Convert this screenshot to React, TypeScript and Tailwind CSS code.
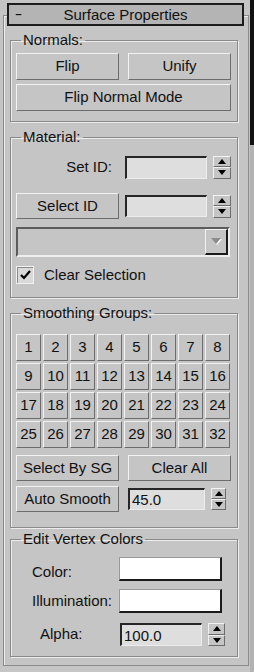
import React from "react";

const raised =
  "bg-[#c5c5c5] border border-t-[#f2f2f2] border-l-[#f2f2f2] border-b-[#6c6c6c] border-r-[#6c6c6c]";
const sunken =
  "bg-[#dedede] border-t-2 border-l-2 border-b border-r border-t-[#262626] border-l-[#262626] border-b-[#ececec] border-r-[#ececec]";

const Btn: React.FC<{ children: React.ReactNode; className?: string }> = ({ children, className }) => (
  <div className={`flex items-center justify-center ${raised} ${className ?? ""}`}>{children}</div>
);

const Spinner: React.FC<{ className?: string }> = ({ className }) => (
  <div className={`flex flex-col ${className ?? ""}`}>
    <div className={`flex-1 flex items-center justify-center ${raised}`}>
      <svg width="8" height="5" viewBox="0 0 8 5">
        <path d="M4 0 L8 5 H0 Z" fill="#000" />
      </svg>
    </div>
    <div className={`flex-1 flex items-center justify-center ${raised}`}>
      <svg width="8" height="5" viewBox="0 0 8 5">
        <path d="M0 0 H8 L4 5 Z" fill="#000" />
      </svg>
    </div>
  </div>
);

const Group: React.FC<{ title: string; className?: string; children: React.ReactNode }> = ({
  title,
  className,
  children,
}) => (
  <fieldset
    className={`ml-[6px] w-[228px] min-w-0 border border-[#8a8a8a] shadow-[inset_1px_1px_0_#ececec,1px_1px_0_#ececec] pl-[5px] pr-[6px] ${className ?? ""}`}
  >
    <legend className="ml-[5px] px-[2px] leading-[16px]">{title}</legend>
    {children}
  </fieldset>
);

export default function App() {
  return (
    <div className="w-[254px] h-[672px] bg-[#c5c5c5] flex font-['Liberation_Sans',Arial,sans-serif] text-[15px] text-[#111]">
      <div className="w-[250px] pt-[15px]">
        <div className="ml-[3px] w-[246px] h-[651px] border border-[#8a8a8a] shadow-[inset_1px_1px_0_#ececec]">
          {/* rollout header */}
          <div className="-mt-[13px] ml-[3px] w-[237px] h-[23px] border-2 border-[#1c1c1c] bg-[#b4b4b4] relative flex items-center justify-center leading-none">
            <span className="absolute left-[7px] top-[1px] scale-x-150">-</span>
            <span>Surface Properties</span>
          </div>

          <Group title="Normals:" className="mt-[6px] pt-[5px] pb-[10px]">
            <div className="flex gap-[9px]">
              <Btn className="w-[103px] h-[27px]">Flip</Btn>
              <Btn className="w-[103px] h-[27px]">Unify</Btn>
            </div>
            <Btn className="mt-[4px] w-[215px] h-[27px]">Flip Normal Mode</Btn>
          </Group>

          <Group title="Material:" className="mt-[7px] pt-[9px] pb-[12px]">
            <div className="flex items-center h-[26px]">
              <div className="w-[103px] text-right pr-[7px]">Set ID:</div>
              <div className={`ml-[6px] w-[82px] h-[23px] ${sunken}`} />
              <Spinner className="ml-[6px] w-[18px] h-[23px]" />
            </div>
            <div className="mt-[13px] flex items-center h-[26px]">
              <Btn className="w-[103px] h-[26px]">Select ID</Btn>
              <div className={`ml-[6px] w-[82px] h-[22px] ${sunken}`} />
              <Spinner className="ml-[6px] w-[18px] h-[23px]" />
            </div>
            <div className="mt-[8px] flex">
              <div className="flex w-fit border-2 border-t-[#5c5c5c] border-l-[#5c5c5c] border-b-[#eeeeee] border-r-[#eeeeee]">
                <div className="w-[187px] h-[26px]" />
                <div className="w-[23px] h-[26px] flex items-center justify-center bg-[#c5c5c5] border border-t-[#f2f2f2] border-l-[#f2f2f2] border-b-2 border-r-2 border-b-[#1a1a1a] border-r-[#1a1a1a]">
                  <svg width="11" height="7" viewBox="0 0 11 7">
                    <path d="M1 1 H11 L6 7 Z" fill="#ffffff" />
                    <path d="M0 0 H10 L5 6 Z" fill="#8c8c8c" />
                  </svg>
                </div>
              </div>
            </div>
            <div className="mt-[8px] h-[20px] flex items-center gap-[10px]">
              <div className="w-[18px] h-[18px] shrink-0 flex items-center justify-center bg-[#d9d9d9] border border-[#f2f2f2] shadow-[inset_1px_1px_0_#8a8a8a]">
                <svg width="11" height="10" viewBox="0 0 11 10">
                  <path d="M1 5 L4 8 L10 1" stroke="#000" strokeWidth="2.2" fill="none" />
                </svg>
              </div>
              <span>Clear Selection</span>
            </div>
          </Group>

          <Group title="Smoothing Groups:" className="mt-[7px] pt-[13px] pb-[15px]">
            <div className="grid grid-cols-8 gap-x-[2px] gap-y-[2px] w-[214px]">
              {Array.from({ length: 32 }, (_, i) => (
                <Btn key={i} className="h-[27px]">
                  {i + 1}
                </Btn>
              ))}
            </div>
            <div className="mt-[7px] flex gap-[9px]">
              <Btn className="w-[103px] h-[26px]">Select By SG</Btn>
              <Btn className="w-[103px] h-[26px]">Clear All</Btn>
            </div>
            <div className="mt-[5px] flex items-center">
              <Btn className="w-[103px] h-[26px]">Auto Smooth</Btn>
              <div className={`ml-[9px] w-[77px] h-[22px] flex items-center pl-[2px] leading-none ${sunken}`}>
                45.0
              </div>
              <Spinner className="ml-[6px] w-[15px] h-[22px]" />
            </div>
          </Group>

          <Group title="Edit Vertex Colors" className="mt-[3px] pt-[10px] pb-[10px]">
            <div className="flex items-end h-[24px]">
              <div className="w-[103px] pl-[16px] leading-[18px]">Color:</div>
              <div className="w-[103px] h-[24px] bg-white border border-t-[#9a9a9a] border-l-[#9a9a9a] border-b-2 border-r-2 border-b-[#1a1a1a] border-r-[#1a1a1a]" />
            </div>
            <div className="mt-[8px] flex items-center h-[24px]">
              <div className="w-[103px] pl-[16px]">Illumination:</div>
              <div className="w-[103px] h-[24px] bg-white border border-t-[#9a9a9a] border-l-[#9a9a9a] border-b-2 border-r-2 border-b-[#1a1a1a] border-r-[#1a1a1a]" />
            </div>
            <div className="mt-[10px] flex items-center h-[23px]">
              <div className="w-[104px] pl-[24px]">Alpha:</div>
              <div className={`w-[82px] h-[23px] flex items-center pl-[2px] leading-none ${sunken}`}>100.0</div>
              <Spinner className="ml-[6px] w-[17px] h-[23px]" />
            </div>
          </Group>
        </div>
      </div>
      <div className="w-[4px] flex flex-col">
        <div className="h-[145px] bg-[#111]" />
        <div className="flex-1 bg-[#b2b2b2]" />
      </div>
    </div>
  );
}
